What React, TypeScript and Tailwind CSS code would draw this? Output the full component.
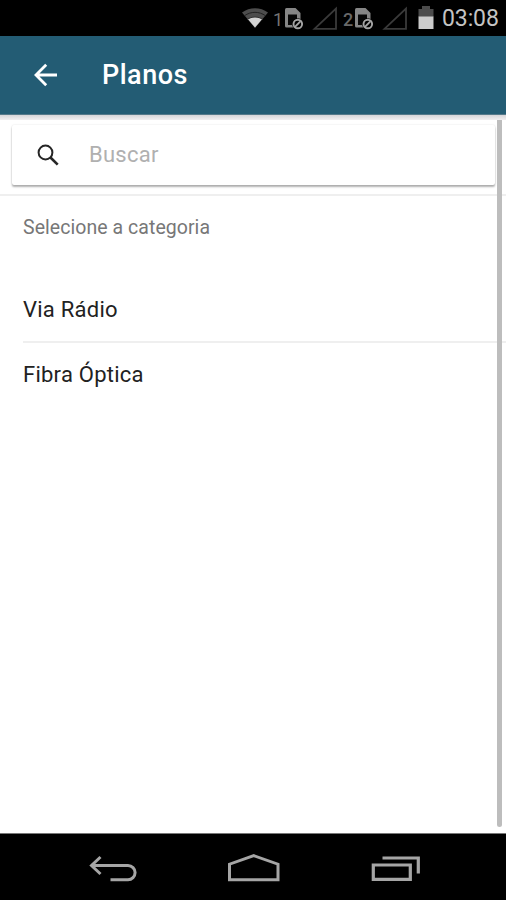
interface Category {
  id: string;
  name: string;
}

const categories: Category[] = [
  { id: 'radio', name: 'Via Rádio' },
  { id: 'fibra', name: 'Fibra Óptica' },
];

const WifiIcon = () => (
  <svg width="28" height="22" viewBox="0 0 28 22" fill="none">
    <path d="M1 5.5C8.5-.2 19.500-.2 27 5.500L14 21Z" fill="#4d4d4d" />
    <path d="M3.500 8.700C10 4.200 18 4.200 24.500 8.700" stroke="#222" strokeWidth="1" />
    <path d="M7 12.200C11.500 9.300 16.500 9.300 21 12.200L14 20.500Z" fill="#d4d4d4" />
    <path d="M6 12.500C11 9.200 17 9.200 22 12.500" stroke="#333" strokeWidth="1" />
  </svg>
);

const SimIcon = () => (
  <svg width="20" height="23" viewBox="0 0 20 23" fill="none">
    <path d="M2.500 1H11.500L16.500 6V20.500H2.500Q1 20.500 1 19V2.500Q1 1 2.500 1Z" fill="#868686" />
    <path d="M4 7.500H13V18H4Z" fill="#080808" />
    <circle cx="13.800" cy="17" r="5.800" fill="#000" />
    <circle cx="13.800" cy="17" r="4.300" stroke="#a4a4a4" strokeWidth="1.900" />
    <path d="M11 19.800L16.600 14.200" stroke="#a4a4a4" strokeWidth="1.900" />
  </svg>
);

const SignalIcon = () => (
  <svg width="26" height="24" viewBox="0 0 26 24" fill="none">
    <path d="M2.500 22.800L24 2.500V22.800Z" stroke="#3a3a3a" strokeWidth="1.800" />
  </svg>
);

const BatteryIcon = () => (
  <svg width="16" height="23" viewBox="0 0 16 23">
    <path d="M4 0H12V3H15.500V11H.5V3H4Z" fill="#4c4c4c" />
    <path d="M.5 10.500H15.500V23H.5Z" fill="#cbcbcb" />
  </svg>
);

const StatusBar = () => (
  <div className="flex h-9 shrink-0 items-start bg-black pl-[241px] text-[#c4c4c4]">
    <div className="mt-[7px]">
      <WifiIcon />
    </div>
    <span className="mt-[9px] ml-[4px] w-[11px] text-[18px] leading-[22px] text-[#747474]">1</span>
    <div className="mt-[7px]">
      <SimIcon />
    </div>
    <div className="mt-[6px] ml-[8px]">
      <SignalIcon />
    </div>
    <span className="mt-[9px] ml-[5px] w-[11px] text-[18px] leading-[22px] font-medium text-[#686868]">2</span>
    <div className="mt-[7px]">
      <SimIcon />
    </div>
    <div className="mt-[6px] ml-[8px]">
      <SignalIcon />
    </div>
    <div className="mt-[6px] ml-[10px]">
      <BatteryIcon />
    </div>
    <span className="mt-[5px] ml-[8px] text-[23px] leading-[28px] tracking-[-0.1px]">03:08</span>
  </div>
);

const Header = () => (
  <header className="flex h-[79px] shrink-0 items-center border-b border-[#54798a] bg-[#235c74] pl-[34px] text-white">
    <button type="button" aria-label="Voltar">
      <svg width="24" height="24" viewBox="0 0 24 24" fill="none" stroke="currentColor" strokeWidth="2.800">
        <path d="M23 12H3M12.200 1.700L2 12L12.200 22.300" />
      </svg>
    </button>
    <h1 className="ml-[44px] text-[27px] leading-8 font-medium tracking-[0.5px]">Planos</h1>
  </header>
);

const SearchBar = () => (
  <div className="h-[76px] border-b-2 border-[#efefef] pt-[5px] pr-[11px] pl-[12px]">
    <label className="flex h-[60px] items-center rounded-[2px] pl-[25px] shadow-[0_2px_2px_rgba(0,0,0,0.3),0_0_2px_rgba(0,0,0,0.12)]">
      <svg width="22" height="22" viewBox="0 0 22 22" fill="none" stroke="#262626">
        <circle cx="8.500" cy="8.500" r="6.900" strokeWidth="2" />
        <path d="M13.500 13.500L20.700 20.700" strokeWidth="2.600" />
      </svg>
      <input
        type="text"
        placeholder="Buscar"
        className="-mt-px ml-[30px] w-80 text-[22px] leading-7 tracking-[0.25px] outline-none placeholder:text-[#b0b0b0]"
      />
    </label>
  </div>
);

const CategoryList = () => (
  <section className="pl-[23px]">
    <h2 className="flex h-[82px] items-start pt-[18px] text-[19.5px] leading-7 tracking-[0.05px] text-[#777]">
      Selecione a categoria
    </h2>
    <ul>
      {categories.map((category) => (
        <li
          key={category.id}
          className="flex h-[65px] items-center border-b-2 border-[#efefef] text-[22px] leading-7 tracking-[0.25px] text-[#222] last:border-transparent"
        >
          {category.name}
        </li>
      ))}
    </ul>
  </section>
);

const NavigationBar = () => (
  <nav className="flex h-[67px] shrink-0 items-start border-t border-[#777] bg-black pt-[19px] pl-[89px] text-[#a5a5a5]">
    <svg width="48" height="30" viewBox="0 0 48 30" fill="none" stroke="currentColor" strokeWidth="3">
      <path d="M2 12.500H39A7.100 7.100 0 0 1 39 26.700H21.500M11.500 4L2.500 12.500L11.500 21" />
    </svg>
    <svg className="ml-[90px]" width="54" height="30" viewBox="0 0 54 30" fill="none" stroke="currentColor" strokeWidth="3">
      <path d="M2.500 26.800V11.200L26.800 2.700L51 11.200V26.800Z" />
    </svg>
    <svg className="ml-[89px]" width="52" height="30" viewBox="0 0 52 30" fill="none" stroke="currentColor" strokeWidth="3.200">
      <path d="M3.300 12H40.300V26.300H3.300ZM12.500 5H48.300V20.500" />
    </svg>
  </nav>
);

export default function App() {
  return (
    <div className="flex h-[900px] w-[506px] flex-col overflow-hidden bg-white font-['Roboto',sans-serif]">
      <StatusBar />
      <Header />
      <main className="relative flex-1 bg-white">
        <div className="h-[5px] bg-linear-to-b from-[#d5d5d8] to-[#f1eff1]" />
        <SearchBar />
        <CategoryList />
        <div className="absolute top-[5px] right-[4px] h-[707px] w-[5px] rounded-b-sm bg-[#bdbdbd]" />
      </main>
      <NavigationBar />
    </div>
  );
}
